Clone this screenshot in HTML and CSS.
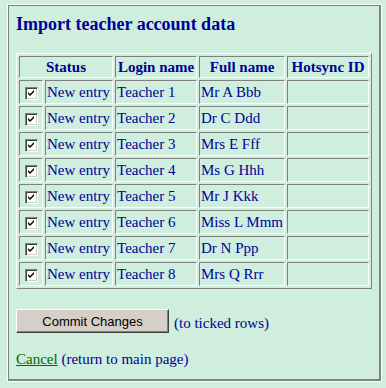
FILE: index.html
```html
<!DOCTYPE html>
<html>
<head>
<meta charset="utf-8">
<link rel="stylesheet" href="styles.css">
</head>
<body>
<div class="panel">
  <div class="panel-inner">
    <h1 class="title">Import teacher account data</h1>
    <table class="grid">
      <colgroup>
        <col class="c-check"><col class="c-status"><col class="c-login"><col class="c-full"><col class="c-sync">
      </colgroup>
      <thead>
        <tr class="head"><th colspan="2">Status</th><th>Login name</th><th>Full name</th><th>Hotsync ID</th></tr>
      </thead>
      <tbody>
        <tr><td class="cb"><span class="box"><svg viewBox="0 0 7 7" width="7" height="7"><path d="M0 2 L2 4 L6 0 L6 2 L2 6 L0 4 Z" fill="#000"/></svg></span></td><td>New entry</td><td>Teacher 1</td><td>Mr A Bbb</td><td></td></tr>
        <tr><td class="cb"><span class="box"><svg viewBox="0 0 7 7" width="7" height="7"><path d="M0 2 L2 4 L6 0 L6 2 L2 6 L0 4 Z" fill="#000"/></svg></span></td><td>New entry</td><td>Teacher 2</td><td>Dr C Ddd</td><td></td></tr>
        <tr><td class="cb"><span class="box"><svg viewBox="0 0 7 7" width="7" height="7"><path d="M0 2 L2 4 L6 0 L6 2 L2 6 L0 4 Z" fill="#000"/></svg></span></td><td>New entry</td><td>Teacher 3</td><td>Mrs E Fff</td><td></td></tr>
        <tr><td class="cb"><span class="box"><svg viewBox="0 0 7 7" width="7" height="7"><path d="M0 2 L2 4 L6 0 L6 2 L2 6 L0 4 Z" fill="#000"/></svg></span></td><td>New entry</td><td>Teacher 4</td><td>Ms G Hhh</td><td></td></tr>
        <tr><td class="cb"><span class="box"><svg viewBox="0 0 7 7" width="7" height="7"><path d="M0 2 L2 4 L6 0 L6 2 L2 6 L0 4 Z" fill="#000"/></svg></span></td><td>New entry</td><td>Teacher 5</td><td>Mr J Kkk</td><td></td></tr>
        <tr><td class="cb"><span class="box"><svg viewBox="0 0 7 7" width="7" height="7"><path d="M0 2 L2 4 L6 0 L6 2 L2 6 L0 4 Z" fill="#000"/></svg></span></td><td>New entry</td><td>Teacher 6</td><td>Miss L Mmm</td><td></td></tr>
        <tr><td class="cb"><span class="box"><svg viewBox="0 0 7 7" width="7" height="7"><path d="M0 2 L2 4 L6 0 L6 2 L2 6 L0 4 Z" fill="#000"/></svg></span></td><td>New entry</td><td>Teacher 7</td><td>Dr N Ppp</td><td></td></tr>
        <tr><td class="cb"><span class="box"><svg viewBox="0 0 7 7" width="7" height="7"><path d="M0 2 L2 4 L6 0 L6 2 L2 6 L0 4 Z" fill="#000"/></svg></span></td><td>New entry</td><td>Teacher 8</td><td>Mrs Q Rrr</td><td></td></tr>
      </tbody>
    </table>
    <div class="actions">
      <button class="btn" type="button">Commit Changes</button>
      <span class="note">(to ticked rows)</span>
    </div>
    <p class="cancel"><a href="#" class="link">Cancel</a> (return to main page)</p>
  </div>
</div>
</body>
</html>
```

FILE: styles.css
```css
html, body {
  margin: 0;
  padding: 0;
}
body {
  background: #cfeedd;
  font-family: "Liberation Serif", "Times New Roman", serif;
  font-size: 15px;
  color: #000099;
}
.panel {
  margin: 4px 0 0 7px;
  width: 375px;
  height: 378px;
  box-sizing: border-box;
  border: 1px solid #ffffff;
}
.panel-inner {
  height: 100%;
  box-sizing: border-box;
  border-style: solid;
  border-color: #808080;
  border-width: 1px 2px 2px 1px;
  padding: 7px 7px 0 7px;
}
.title {
  margin: 0 0 18px 0;
  font-size: 18px;
  line-height: 22px;
  font-weight: bold;
  color: #000099;
}
.grid {
  table-layout: fixed;
  width: 356px;
  border-collapse: separate;
  border-spacing: 2px;
  border-style: solid;
  border-width: 1px;
  border-color: #ffffff #808080 #808080 #ffffff;
}
.c-check { width: 24px; }
.c-status { width: 68px; }
.c-login { width: 82px; }
.c-full { width: 86px; }
.c-sync { width: 82px; }
.grid th, .grid td {
  box-sizing: border-box;
  border-style: solid;
  border-width: 1px;
  border-color: #808080 #ffffff #ffffff #808080;
  padding: 1px;
  white-space: nowrap;
  overflow: hidden;
  line-height: 17px;
  vertical-align: middle;
}
.grid th {
  height: 22px;
  font-weight: bold;
  text-align: center;
}
.grid td {
  height: 24px;
  text-align: left;
}
.grid td.cb {
  text-align: center;
}
.box {
  display: inline-flex;
  align-items: center;
  justify-content: center;
  width: 13px;
  height: 13px;
  box-sizing: border-box;
  background: #ffffff;
  border-style: solid;
  border-width: 1px;
  border-color: #808080 #ffffff #ffffff #808080;
  box-shadow: inset 1px 1px 0 #404040, inset -1px -1px 0 #d4d0c8;
  vertical-align: middle;
}
.box svg {
  display: block;
}
.actions {
  display: flex;
  align-items: flex-end;
  gap: 5px;
  margin-top: 20px;
}
.btn {
  width: 153px;
  height: 24px;
  margin: 0;
  padding: 0;
  box-sizing: border-box;
  background: #d4d0c8;
  font-family: "Liberation Sans", Arial, sans-serif;
  font-size: 13px;
  color: #000000;
  border-style: solid;
  border-width: 1px;
  border-color: #ffffff #404040 #404040 #ffffff;
  box-shadow: inset -1px -1px 0 #808080;
}
.note {
  line-height: 17px;
  margin-bottom: 1px;
}
.cancel {
  margin: 18px 0 0 0;
  line-height: 17px;
}
.link {
  color: #006600;
  text-decoration: underline;
}
```
